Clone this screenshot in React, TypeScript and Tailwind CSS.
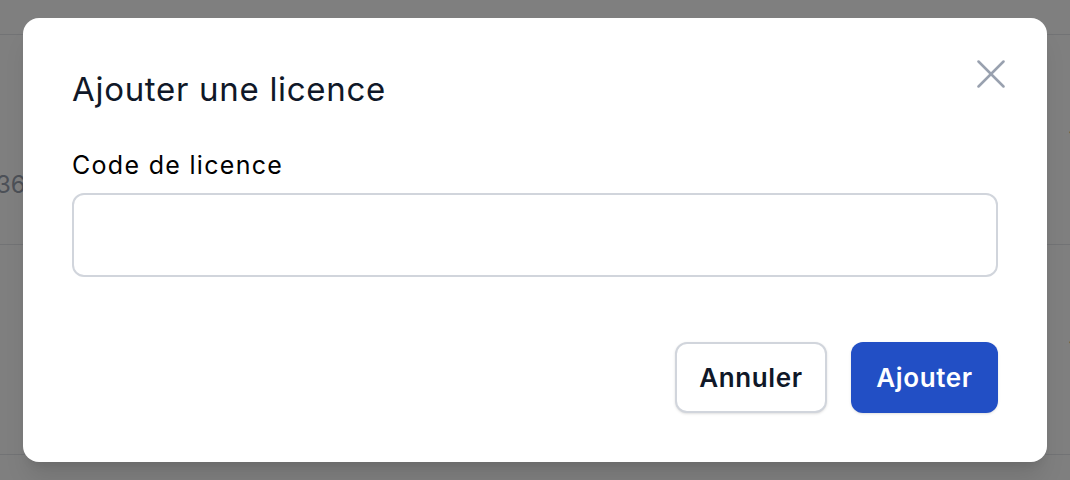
import { useState } from "react";

const rows = [
  { id: 1, left: "36", right: "·" },
  { id: 2, left: "", right: "·" },
];

function CloseIcon() {
  return (
    <svg width="28" height="28" viewBox="0 0 28 28" fill="none" stroke="currentColor" strokeWidth="2.5" strokeLinecap="round">
      <path d="M1.5 1.5 L26.5 26.5" />
      <path d="M26.5 1.5 L1.5 26.5" />
    </svg>
  );
}

export default function App() {
  const [code, setCode] = useState("");

  return (
    <div className="relative w-[1070px] h-[480px] overflow-hidden bg-white" style={{ fontFamily: "Inter, 'Noto Sans', sans-serif" }}>
      {/* page behind the dialog */}
      <div className="pt-[34px]">
        <div className="border-t border-gray-200">
          {rows.map((row) => (
            <div key={row.id} className="h-[210px] border-b border-gray-200 flex items-center justify-between">
              <span className="text-[24px] text-gray-400 -ml-1 mt-[90px]">{row.left}</span>
              <span className="text-[20px] text-black -mr-1 -mt-4">{row.right}</span>
            </div>
          ))}
        </div>
      </div>

      {/* overlay */}
      <div className="absolute inset-0 bg-black/50 flex items-center justify-center">
        <div className="relative w-[1024px] h-[444px] bg-white rounded-2xl px-[49px] pt-[51px] pb-[49px] flex flex-col shadow-xl">
          <button type="button" className="absolute top-[42px] right-[42px] text-gray-400">
            <CloseIcon />
          </button>
          <h2 className="text-[33px] leading-[40px] font-normal tracking-[0.7px] text-gray-900 m-0">Ajouter une licence</h2>
          <label className="mt-[40px] text-[25px] leading-[32px] font-normal tracking-[1.3px] text-black">Code de licence</label>
          <input
            value={code}
            onChange={(e) => setCode(e.target.value)}
            className="mt-[12px] h-[84px] w-full rounded-xl border-2 border-gray-300 px-4 text-[24px] outline-none"
          />
          <div className="mt-auto flex justify-end gap-6">
            <button
              type="button"
              className="h-[71px] w-[152px] rounded-xl border-2 border-gray-300 bg-white text-[26px] font-semibold tracking-[0.6px] text-gray-900 shadow-sm"
            >
              Annuler
            </button>
            <button
              type="button"
              className="h-[71px] w-[147px] rounded-xl bg-[#224fc5] text-[26px] font-semibold tracking-[0.6px] text-white shadow-sm"
            >
              Ajouter
            </button>
          </div>
        </div>
      </div>
    </div>
  );
}
